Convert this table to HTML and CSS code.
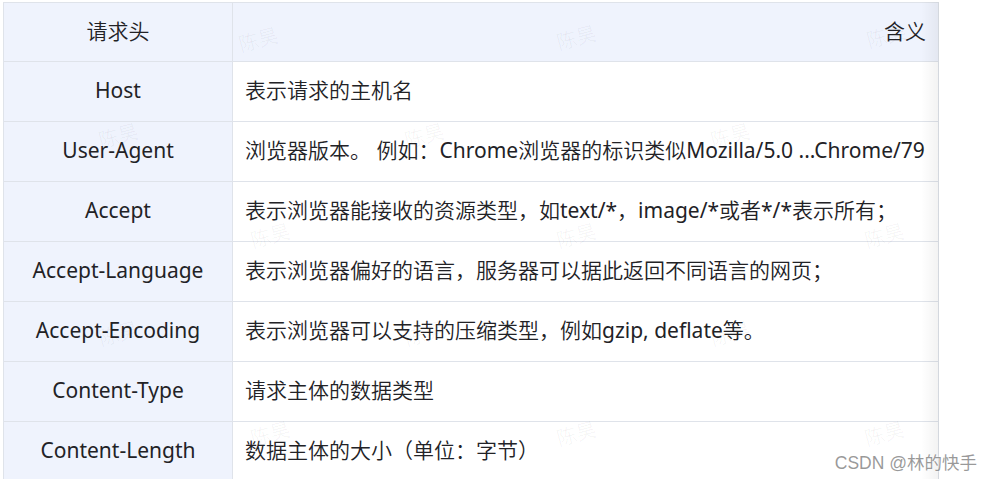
FILE: index.html
```html
<!DOCTYPE html>
<html lang="zh-CN">
<head>
<meta charset="utf-8">
<title>请求头</title>
<link rel="stylesheet" href="styles.css">
</head>
<body>
<div class="wrap">
  <div class="scroller">
    <table class="tbl">
      <thead>
        <tr><th class="c1">请求头</th><th class="c2">含义</th></tr>
      </thead>
      <tbody>
        <tr><td class="c1">Host</td><td class="c2">表示请求的主机名</td></tr>
        <tr><td class="c1">User-Agent</td><td class="c2">浏览器版本。 例如：Chrome浏览器的标识类似Mozilla/5.0 ...Chrome/79</td></tr>
        <tr><td class="c1">Accept</td><td class="c2">表示浏览器能接收的资源类型，如text/*，image/*或者*/*表示所有；</td></tr>
        <tr><td class="c1">Accept-Language</td><td class="c2">表示浏览器偏好的语言，服务器可以据此返回不同语言的网页；</td></tr>
        <tr><td class="c1">Accept-Encoding</td><td class="c2">表示浏览器可以支持的压缩类型，例如gzip, deflate等。</td></tr>
        <tr><td class="c1">Content-Type</td><td class="c2">请求主体的数据类型</td></tr>
        <tr><td class="c1">Content-Length</td><td class="c2">数据主体的大小（单位：字节）</td></tr>
      </tbody>
    </table>
    <div class="edge"></div>
  </div>
  <div class="marks">
    <span class="wm" style="left:238px;top:24px">陈昊</span>
    <span class="wm" style="left:556px;top:22px">陈昊</span>
    <span class="wm" style="left:866px;top:20px">陈昊</span>
    <span class="wm" style="left:98px;top:120px">陈昊</span>
    <span class="wm" style="left:404px;top:120px">陈昊</span>
    <span class="wm" style="left:710px;top:120px">陈昊</span>
    <span class="wm" style="left:250px;top:220px">陈昊</span>
    <span class="wm" style="left:556px;top:220px">陈昊</span>
    <span class="wm" style="left:864px;top:220px">陈昊</span>
    <span class="wm" style="left:98px;top:318px">陈昊</span>
    <span class="wm" style="left:404px;top:318px">陈昊</span>
    <span class="wm" style="left:710px;top:318px">陈昊</span>
    <span class="wm" style="left:250px;top:418px">陈昊</span>
    <span class="wm" style="left:556px;top:418px">陈昊</span>
    <span class="wm" style="left:864px;top:418px">陈昊</span>
  </div>
  <div class="csdn">CSDN @林的快手</div>
</div>
</body>
</html>
```
FILE: styles.css
```css
html, body {
  margin: 0;
  padding: 0;
  background: #ffffff;
}
body {
  width: 982px;
  height: 479px;
  overflow: hidden;
  font-family: "Noto Sans", "Noto Sans CJK SC DemiLight", "Noto Sans CJK SC", sans-serif;
  color: #222226;
}
.wrap {
  position: relative;
  width: 982px;
  height: 479px;
  padding: 2px 0 0 3px;
  box-sizing: border-box;
}
.scroller {
  position: relative;
  width: 936px;
}
.tbl {
  border-collapse: collapse;
  width: 936px;
  font-size: 21px;
  table-layout: fixed;
}
.tbl th, .tbl td {
  border: 1px solid #dfe3ea;
  height: 58px;
  padding: 0 12px 1px;
  font-weight: 400;
  white-space: nowrap;
  line-height: 1.3;
  vertical-align: middle;
}
.tbl th {
  background: #eff3fd;
  height: 58px;
  padding-bottom: 0;
}
.tbl th.c1, .tbl td.c1 {
  width: 204px;
  text-align: center;
  background: #eff3fd;
}
.tbl th.c2 {
  text-align: right;
}
.tbl td.c2 {
  text-align: left;
  background: #ffffff;
}
.edge {
  position: absolute;
  top: 0;
  right: 0;
  bottom: 0;
  width: 18px;
  background: linear-gradient(to right, rgba(0,0,0,0), rgba(0,0,0,0.05));
  pointer-events: none;
}
.marks {
  position: absolute;
  inset: 0;
  pointer-events: none;
}
.wm {
  position: absolute;
  font-family: "Noto Sans CJK SC", sans-serif;
  font-size: 20px;
  font-weight: 300;
  color: rgba(0, 0, 0, 0.06);
  transform: rotate(-15deg);
  white-space: nowrap;
}
.csdn {
  position: absolute;
  right: 5px;
  bottom: 5px;
  font-family: "Liberation Sans", "Noto Sans CJK SC", sans-serif;
  font-size: 17.5px;
  color: rgba(120, 120, 120, 0.75);
  text-shadow: 0 0 2px #fff;
}
```
